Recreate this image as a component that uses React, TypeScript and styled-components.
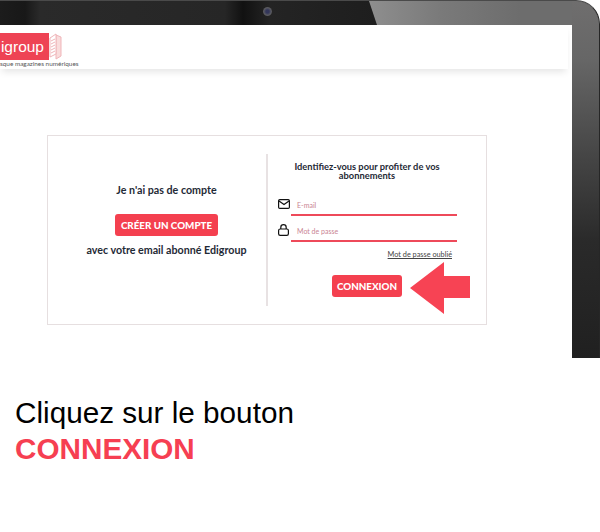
import React from "react";
import styled, { createGlobalStyle } from "styled-components";

const Global = createGlobalStyle`
  html, body { margin: 0; padding: 0; background: #fff; }
  body { width: 600px; height: 532px; overflow: hidden; font-family: "Liberation Sans", Arial, sans-serif; }
`;

const Page = styled.div`
  width: 600px;
  height: 532px;
  display: flex;
  flex-direction: column;
  overflow: hidden;
`;

const Laptop = styled.section`
  box-sizing: border-box;
  width: 600px;
  height: 358px;
  flex: none;
  padding: 24px 27px 0 0;
  border-top-right-radius: 24px;
  border-top: 1px solid #4a4a4a;
  border-right: 1px solid #262626;
  background: linear-gradient(180deg, #6f6e6e 0, #666 60px, #474747 150px, #2a2a2a 240px, #202020 100%);
  position: relative;
  display: flex;
`;

const TopBezel = styled.div`
  position: absolute;
  left: 0;
  top: 0;
  width: 572px;
  height: 24px;
  background: linear-gradient(90deg, #8e8e8e 370px, #7a7a7a 440px, #6d6d6d 520px);

  &::before {
    content: "";
    position: absolute;
    inset: 0 auto 0 0;
    width: 377px;
    clip-path: polygon(0 0, 369px 0, 377px 100%, 0 100%);
    background: linear-gradient(90deg, #1c1c1c 0, #181818 25px, #2a2a2a 40px, #262626 225px, #111 243px, #242424 270px, #1e1e1e 377px);
  }
`;

const Camera = styled.span`
  position: absolute;
  left: 263px;
  top: 6px;
  width: 9px;
  height: 9px;
  border-radius: 50%;
  background: radial-gradient(circle, #33365a 0 25%, #5b5b60 60%, #3a3a3a 100%);
`;

const Screen = styled.div`
  flex: 1;
  background: #fff;
  display: flex;
  flex-direction: column;
  overflow: hidden;
`;

const Header = styled.header`
  width: 568px;
  height: 44px;
  flex: none;
  background: #fff;
  box-shadow: 0 5px 7px -2px rgba(0, 0, 0, 0.1);
  display: flex;
  flex-direction: column;
`;

const LogoRow = styled.div`
  display: flex;
  align-items: flex-start;
  margin-top: 8px;
`;

const LogoBadge = styled.div`
  width: 49px;
  height: 27px;
  background: #ee4354;
  color: #fff;
  font-family: "Liberation Sans", sans-serif;
  font-size: 15.5px;
  line-height: 27px;
  display: flex;
  justify-content: flex-end;
  padding-right: 5px;
  box-sizing: border-box;
  white-space: nowrap;
`;

const Tagline = styled.div`
  font-family: "Lato", sans-serif;
  font-size: 6.4px;
  line-height: 8px;
  color: #555;
  white-space: nowrap;
`;

const Card = styled.main`
  box-sizing: border-box;
  width: 440px;
  height: 190px;
  margin: 66px 0 0 47px;
  border: 1px solid #e6dfe0;
  display: flex;
  padding: 18px 0;
  color: #1f2a36;
  font-family: "Lato", sans-serif;
`;

const LeftCol = styled.div`
  width: 220px;
  flex: none;
  display: flex;
  flex-direction: column;
  align-items: center;
  padding-top: 29px;
  padding-left: 19px;
  box-sizing: border-box;
  border-right: 2px solid #e8e2e3;
`;

const Strong = styled.p`
  margin: 0;
  font-size: 10.7px;
  line-height: 13px;
  font-weight: 700;
  white-space: nowrap;
`;

const Button = styled.button<{ $w: number; $h: number }>`
  border: 0;
  border-radius: 3px;
  background: #f4404f;
  color: #fff;
  font-family: "Lato", sans-serif;
  font-weight: 900;
  font-size: 9.8px;
  padding: 0;
  flex: none;
  height: ${(p) => p.$h}px;
  width: ${(p) => p.$w}px;
  white-space: nowrap;
`;

const CreateButton = styled(Button)`
  margin: 18px 0 7px;
`;

const SubmitButton = styled(Button)`
  margin-top: 13px;
`;

const RightCol = styled.div`
  flex: 1;
  min-width: 0;
  display: flex;
  flex-direction: column;
  padding-left: 9px;
`;

const Title = styled.h2`
  margin: 8px 0 0;
  width: 180px;
  text-align: center;
  font-size: 9.3px;
  line-height: 9px;
  font-weight: 700;
  white-space: nowrap;
`;

const Field = styled.div`
  display: flex;
  align-items: center;
  gap: 1px;
  height: 26px;
`;

const FirstField = styled(Field)`
  margin-top: 10px;
`;

const IconSlot = styled.span`
  width: 13px;
  height: 14px;
  flex: none;
  margin-top: 2px;
  display: flex;
  align-items: center;
  justify-content: center;
`;

const Input = styled.div`
  box-sizing: border-box;
  width: 166px;
  height: 26px;
  border-bottom: 2px solid #ee4a5a;
  color: #c98493;
  font-size: 7px;
  line-height: 14px;
  padding: 8px 0 0 6px;
`;

const Forgot = styled.a`
  align-self: flex-end;
  margin: 8px 34px 0 0;
  font-size: 7.3px;
  line-height: 10px;
  color: #444;
  text-decoration: underline;
`;

const SubmitRow = styled.div`
  display: flex;
  align-items: flex-start;
  margin: 2px 0 0 55px;
`;

const Arrow = styled.svg`
  margin-left: 8px;
  flex: none;
`;

const Caption = styled.div`
  margin: 37px 0 0 15px;
  font-family: "Liberation Sans", Arial, sans-serif;
`;

const CaptionLine = styled.div`
  font-size: 29.7px;
  line-height: 36px;
  color: #000;
  white-space: nowrap;
`;

const CaptionAccent = styled(CaptionLine)`
  font-weight: 700;
  color: #f63f52;
`;

export default function App() {
  return (
    <Page>
      <Global />
      <Laptop>
        <TopBezel>
          <Camera />
        </TopBezel>
        <Screen>
          <Header>
            <LogoRow>
              <LogoBadge>igroup</LogoBadge>
              <svg width="14" height="27" viewBox="0 0 14 27" fill="none">
                <path d="M7 2 12 4 V23 L7 26Z" fill="#f9dcdc" stroke="#efb5b9" />
                <path d="M1 5 7 1 V21 L1 24Z" fill="#fff" stroke="#efb5b9" />
                <path d="M2 8 6 6M2 11 6 9M2 14 6 12M2 17 6 15M2 20 6 18" stroke="#efb5b9" />
              </svg>
            </LogoRow>
            <Tagline>sque magazines numériques</Tagline>
          </Header>
          <Card>
            <LeftCol>
              <Strong>Je n'ai pas de compte</Strong>
              <CreateButton $w={103} $h={22}>CRÉER UN COMPTE</CreateButton>
              <Strong>avec votre email abonné Edigroup</Strong>
            </LeftCol>
            <RightCol>
              <Title>
                Identifiez-vous pour profiter de vos
                <br />
                abonnements
              </Title>
              <FirstField>
                <IconSlot>
                  <svg width="12" height="10" viewBox="0 0 12 10" fill="none" stroke="#111" strokeWidth="1.2">
                    <rect x="0.6" y="0.6" width="10.8" height="8.8" rx="1.2" />
                    <path d="M1 2 6 5.5 11 2" />
                  </svg>
                </IconSlot>
                <Input>E-mail</Input>
              </FirstField>
              <Field>
                <IconSlot>
                  <svg width="11" height="12" viewBox="0 0 11 12" fill="none" stroke="#111" strokeWidth="1.2">
                    <rect x="0.6" y="5" width="9.8" height="6.4" rx="1.6" />
                    <path d="M2.8 5V3.4a2.7 2.7 0 0 1 5.4 0V5" />
                  </svg>
                </IconSlot>
                <Input>Mot de passe</Input>
              </Field>
              <Forgot>Mot de passe oublié</Forgot>
              <SubmitRow>
                <SubmitButton $w={70} $h={22}>CONNEXION</SubmitButton>
                <Arrow width="60" height="52" viewBox="0 0 60 52">
                  <path d="M0 26 34 0V14H60V36H34V52Z" fill="#f74354" />
                </Arrow>
              </SubmitRow>
            </RightCol>
          </Card>
        </Screen>
      </Laptop>
      <Caption>
        <CaptionLine>Cliquez sur le bouton</CaptionLine>
        <CaptionAccent>CONNEXION</CaptionAccent>
      </Caption>
    </Page>
  );
}
